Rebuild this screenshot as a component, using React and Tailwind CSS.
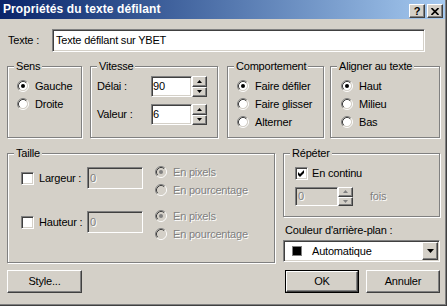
import React from 'react';

const sunken =
  'border border-t-[#808080] border-l-[#808080] border-b-white border-r-white shadow-[inset_1px_1px_0_#404040,inset_-1px_-1px_0_#d4d0c8]';
const raised =
  'border border-t-white border-l-white border-b-[#404040] border-r-[#404040] shadow-[inset_-1px_-1px_0_#808080]';
const dis = 'text-[#808080] [text-shadow:1px_1px_0_#fff]';

function RadioIcon({ checked, disabled }) {
  return (
    <svg width="12" height="12" viewBox="0 0 12 12" className="shrink-0">
      <circle cx="6" cy="6" r="4.2" fill={disabled ? '#d4d0c8' : '#fff'} />
      <path d="M2.11 9.89 A5.5 5.5 0 0 1 9.89 2.11" stroke="#808080" fill="none" />
      <path d="M9.89 2.11 A5.5 5.5 0 0 1 2.11 9.89" stroke="#fff" fill="none" />
      <path d="M2.82 9.18 A4.5 4.5 0 0 1 9.18 2.82" stroke="#404040" fill="none" />
      <path d="M9.18 2.82 A4.5 4.5 0 0 1 2.82 9.18" stroke="#d4d0c8" fill="none" />
      {checked && <circle cx="6" cy="6" r="2" fill={disabled ? '#808080' : '#000'} />}
    </svg>
  );
}

function Radio({ label, checked, disabled }) {
  return (
    <div className="flex items-center h-[16px] gap-[6px]">
      <RadioIcon checked={checked} disabled={disabled} />
      <span className={disabled ? dis : ''}>{label}</span>
    </div>
  );
}

function Checkbox({ checked }) {
  return (
    <div className={`${sunken} w-[13px] h-[13px] bg-white shrink-0 flex items-center justify-center`}>
      {checked && (
        <svg width="7" height="7" viewBox="0 0 7 7">
          <polygon points="0,2 2,4 6,0 6,3 2,7 0,5" fill="#000" />
        </svg>
      )}
    </div>
  );
}

function Spin({ h, disabled }) {
  const c = disabled ? '#808080' : '#000';
  return (
    <div className={`flex flex-col w-[15px] ${h}`}>
      <div className={`${raised} bg-[#d4d0c8] flex-1 flex items-center justify-center`}>
        <svg width="5" height="3" viewBox="0 0 5 3">
          <polygon points="2.5,0 5,3 0,3" fill={c} />
        </svg>
      </div>
      <div className={`${raised} bg-[#d4d0c8] flex-1 flex items-center justify-center`}>
        <svg width="5" height="3" viewBox="0 0 5 3">
          <polygon points="0,0 5,0 2.5,3" fill={c} />
        </svg>
      </div>
    </div>
  );
}

function Group({ label, className, children }) {
  return (
    <div className={`relative border border-[#808080] shadow-[inset_1px_1px_0_#fff,1px_1px_0_#fff] ${className}`}>
      <span className="absolute -top-[7px] left-[6px] bg-[#d4d0c8] px-[2px] leading-[13px]">{label}</span>
      {children}
    </div>
  );
}

function Button({ children, isDefault, className }) {
  const inner = (
    <div className={`${raised} bg-[#d4d0c8] h-full flex items-center justify-center`}>{children}</div>
  );
  return isDefault ? (
    <div className={`border border-black ${className}`}>{inner}</div>
  ) : (
    <div className={className}>{inner}</div>
  );
}

function SizeRow({ label }) {
  return (
    <div className="flex">
      <div className="flex items-center h-[22px] mt-[3px]">
        <div className="ml-[13px]">
          <Checkbox />
        </div>
        <span className="ml-[5px] w-[48px]">{label}</span>
        <div className={`${sunken} w-[56px] h-full flex items-center pl-[2px] ${dis}`}>0</div>
      </div>
      <div className="ml-[12px] flex flex-col gap-[2px]">
        <Radio label="En pixels" checked disabled />
        <Radio label="En pourcentage" disabled />
      </div>
    </div>
  );
}

export default function App() {
  return (
    <div className="w-[447px] h-[306px] bg-[#d4d0c8] flex flex-col text-[11px] leading-[13px] tracking-[-0.2px] text-black font-['Liberation_Sans',Arial,sans-serif] shadow-[inset_-1px_-1px_0_#404040,inset_-2px_-2px_0_#808080] overflow-hidden">
      <div className="h-[19px] mr-[2px] flex items-center bg-linear-to-r from-[#0a246a] to-[#a6caf0] pl-[3px] pr-[2px]">
        <span className="font-bold text-white text-[12px] tracking-[0.1px]">Propriétés du texte défilant</span>
        <div className="ml-auto flex gap-[2px] self-end mb-[1px]">
          <div className={`${raised} bg-[#d4d0c8] w-[16px] h-[14px] flex items-center justify-center font-bold text-[11px] leading-none`}>
            ?
          </div>
          <div className={`${raised} bg-[#d4d0c8] w-[16px] h-[14px] flex items-center justify-center`}>
            <svg width="8" height="7" viewBox="0 0 8 7">
              <path d="M0.5 0 L7.5 7 M7.5 0 L0.5 7" stroke="#000" strokeWidth="1.6" />
            </svg>
          </div>
        </div>
      </div>

      <div className="flex flex-col px-[7px]">
        <div className="flex items-center h-[23px] mt-[10px]">
          <span className="w-[45px] pl-[1px]">Texte :</span>
          <div className={`${sunken} w-[373px] h-full bg-white flex items-center pl-[3px]`}>Texte défilant sur YBET</div>
        </div>

        <div className="flex mt-[14px]">
          <Group label="Sens" className="w-[75px] h-[72px] pl-[9px] pt-[11px] flex flex-col gap-[2px]">
            <Radio label="Gauche" checked />
            <Radio label="Droite" />
          </Group>
          <Group label="Vitesse" className="ml-[8px] w-[128px] h-[72px] pl-[6px] pt-[9px] flex flex-col gap-[7px]">
            {[
              ['Délai :', '90'],
              ['Valeur :', '6'],
            ].map(([l, v]) => (
              <div key={l} className="flex items-center h-[21px]">
                <span className="w-[54px]">{l}</span>
                <div className={`${sunken} w-[41px] h-full bg-white flex items-center pl-[1px]`}>{v}</div>
                <Spin h="h-[21px]" />
              </div>
            ))}
          </Group>
          <Group label="Comportement" className="ml-[9px] w-[97px] h-[72px] pl-[9px] pt-[11px] flex flex-col gap-[2px]">
            <Radio label="Faire défiler" checked />
            <Radio label="Faire glisser" />
            <Radio label="Alterner" />
          </Group>
          <Group label="Aligner au texte" className="ml-[6px] w-[110px] h-[72px] pl-[10px] pt-[11px] flex flex-col gap-[2px]">
            <Radio label="Haut" checked />
            <Radio label="Milieu" />
            <Radio label="Bas" />
          </Group>
        </div>

        <div className="flex mt-[15px]">
          <Group label="Taille" className="w-[268px] h-[110px] pt-[10px] flex flex-col gap-[10px]">
            <SizeRow label="Largeur :" />
            <SizeRow label="Hauteur :" />
          </Group>
          <div className="ml-[8px] w-[157px] flex flex-col">
            <Group label="Répéter" className="h-[64px] pl-[11px] pt-[11px] flex flex-col">
              <div className="flex items-center h-[16px] gap-[4px]">
                <Checkbox checked />
                <span>En continu</span>
              </div>
              <div className="flex items-center h-[19px] mt-[6px]">
                <div className={`${sunken} w-[43px] h-full flex items-center pl-[2px] ${dis}`}>0</div>
                <Spin h="h-[19px]" disabled />
                <span className={`ml-[17px] ${dis}`}>fois</span>
              </div>
            </Group>
            <span className="mt-[7px] pl-[2px]">Couleur d'arrière-plan :</span>
            <div className={`${sunken} mt-[3px] h-[22px] bg-white flex items-center pl-[8px] pr-[1px]`}>
              <div className="w-[10px] h-[10px] bg-black border border-[#808080]" />
              <span className="ml-[10px]">Automatique</span>
              <div className={`${raised} ml-auto w-[16px] h-[18px] bg-[#d4d0c8] flex items-center justify-center`}>
                <svg width="7" height="4" viewBox="0 0 7 4">
                  <polygon points="0,0 7,0 3.5,4" fill="#000" />
                </svg>
              </div>
            </div>
          </div>
        </div>

        <div className="flex mt-[7px] h-[23px]">
          <Button className="w-[75px]">Style...</Button>
          <Button isDefault className="ml-auto w-[74px]">
            OK
          </Button>
          <Button className="ml-[7px] w-[74px]">Annuler</Button>
        </div>
      </div>
    </div>
  );
}
